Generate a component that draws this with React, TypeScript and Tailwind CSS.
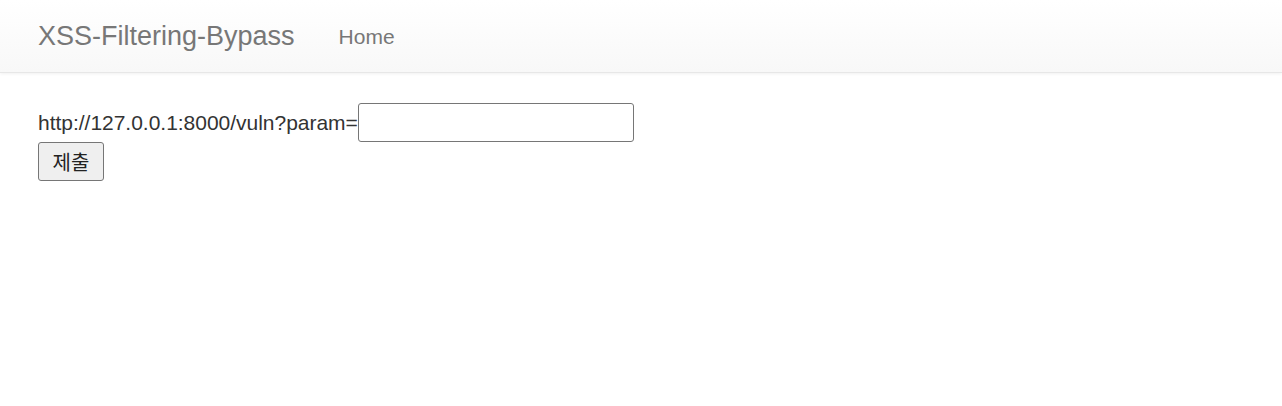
import React from "react";

export default function App() {
  return (
    <div className="min-h-[406px] bg-white" style={{ fontFamily: '"Liberation Sans", Arial, "Noto Sans CJK KR", sans-serif' }}>
      <nav className="h-[73px] border-b border-[#e7e7e7] bg-gradient-to-b from-white to-[#f8f8f8] shadow-[0_1px_3px_rgba(0,0,0,0.06)] flex items-center pl-[38px]">
        <span className="text-[27px] leading-none text-[#777]">XSS-Filtering-Bypass</span>
        <span className="ml-[44px] text-[21px] leading-none text-[#777]">Home</span>
      </nav>
      <div className="pl-[38px] pt-[30px] text-[21px] text-[#333]">
        <div className="flex items-center h-[39px]">
          <span className="tracking-[-0.02px]">http://127.0.0.1:8000/vuln?param=</span>
          <input
            type="text"
            className="w-[276px] h-[39px] border border-[#767676] rounded-[3px] bg-white outline-none"
          />
        </div>
        <button
          className="w-[66px] h-[39px] border border-[#767676] rounded-[3px] bg-[#efefef] text-[20px] text-[#222] flex items-center justify-center"
          style={{ fontFamily: '"Noto Sans CJK KR", sans-serif' }}
        >
          제출
        </button>
      </div>
    </div>
  );
}
